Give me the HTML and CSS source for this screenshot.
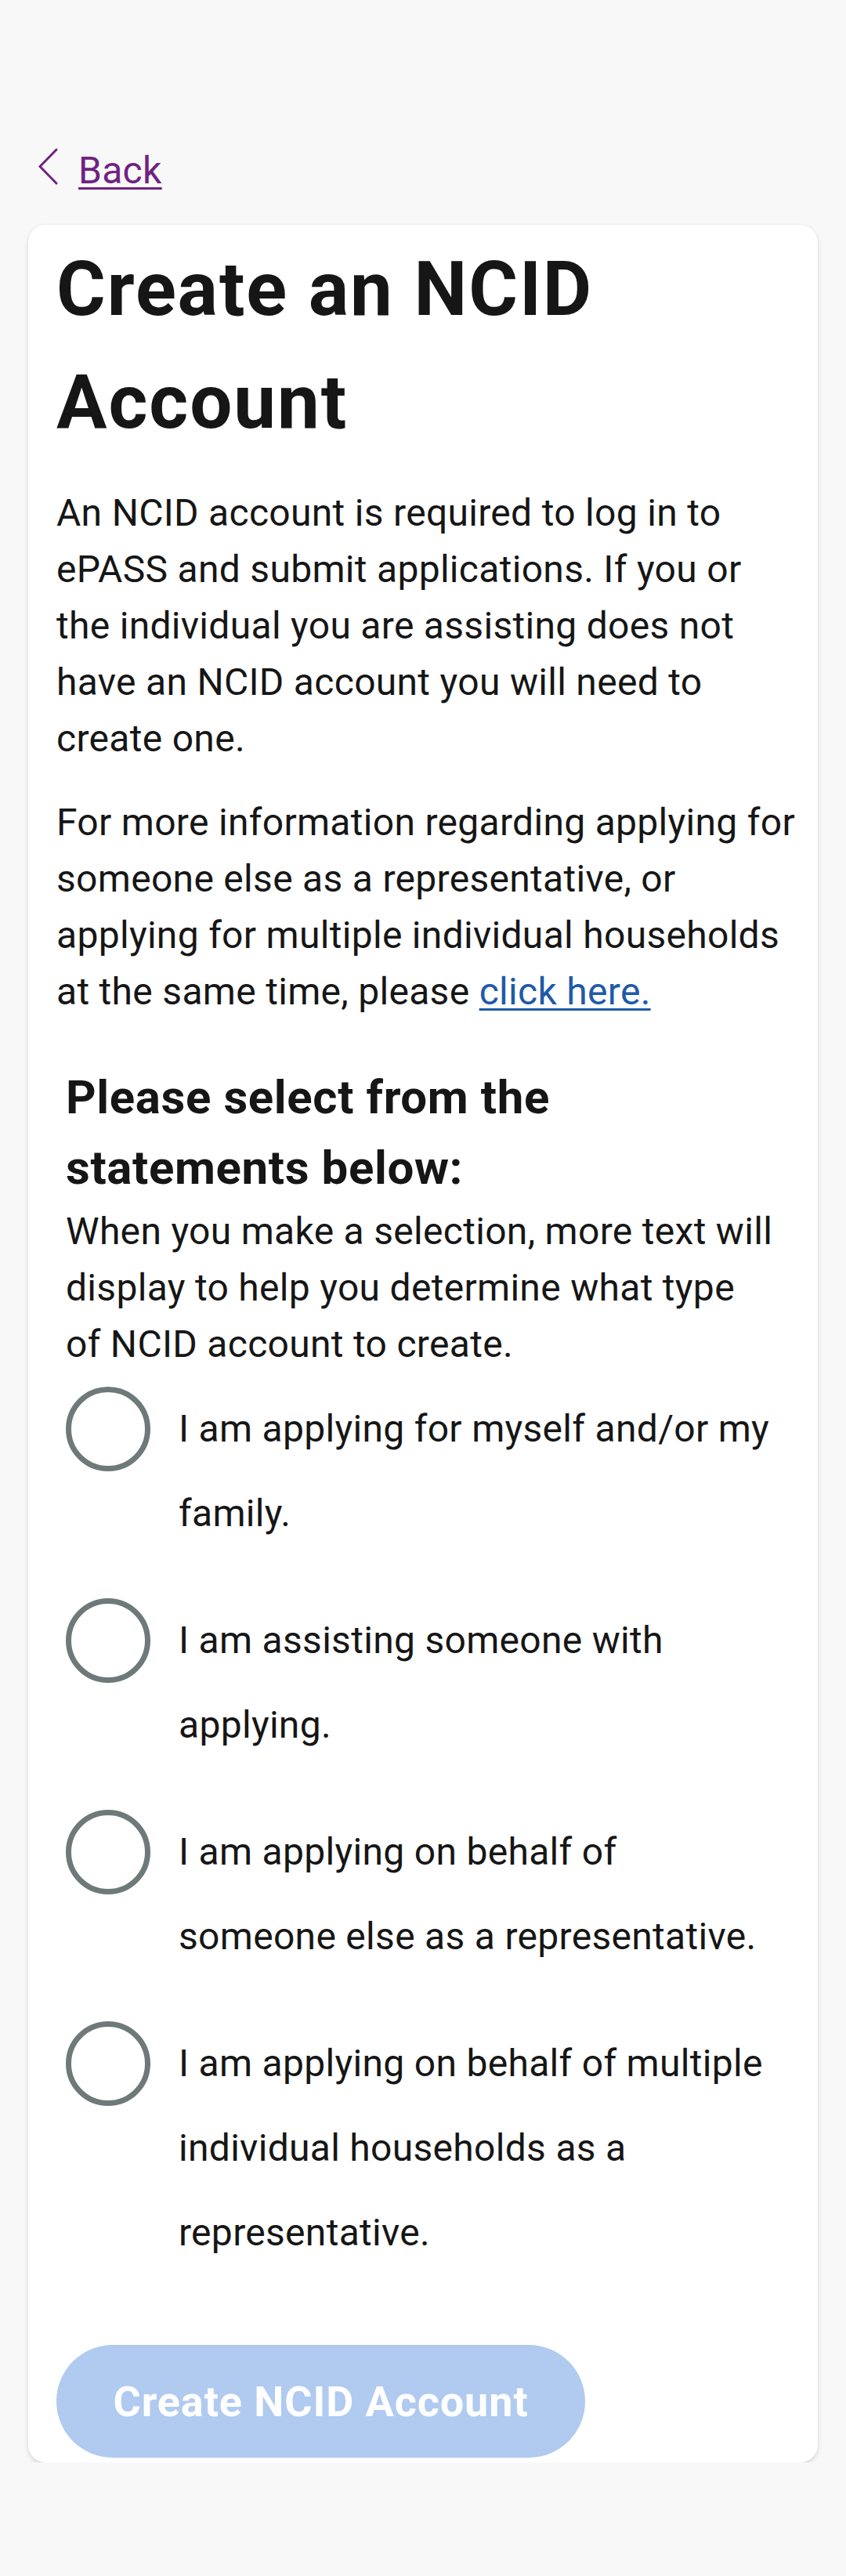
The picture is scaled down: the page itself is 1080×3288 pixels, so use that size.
FILE: index.html
```html
<!DOCTYPE html>
<html lang="en">
<head>
<meta charset="utf-8">
<title>Create an NCID Account</title>
<link rel="stylesheet" href="styles.css">
</head>
<body>
<main class="page">
  <a class="back" href="#">
    <svg class="back-icon" viewBox="0 0 26 47" width="26" height="47" aria-hidden="true">
      <path d="M24 2 L3 23.5 L24 45" fill="none" stroke="currentColor" stroke-width="3" stroke-linecap="round" stroke-linejoin="round"/>
    </svg>
    <span class="back-text">Back</span>
  </a>
  <section class="card">
    <h1 class="title">Create an NCID<br>Account</h1>
    <p class="intro">An NCID account is required to log in to<br>ePASS and submit applications. If you or<br>the individual you are assisting does not<br>have an NCID account you will need to<br>create one.</p>
    <p class="intro">For more information regarding applying for<br>someone else as a representative, or<br>applying for multiple individual households<br>at the same time, please <a class="link" href="#">click here.</a></p>
    <div class="choices">
      <h2 class="choices-title">Please select from the<br>statements below:</h2>
      <p class="choices-hint">When you make a selection, more text will<br>display to help you determine what type<br>of NCID account to create.</p>
      <div class="options">
        <label class="option"><span class="radio"></span><span class="option-text">I am applying for myself and/or my<br>family.</span></label>
        <label class="option"><span class="radio"></span><span class="option-text">I am assisting someone with<br>applying.</span></label>
        <label class="option"><span class="radio"></span><span class="option-text">I am applying on behalf of<br>someone else as a representative.</span></label>
        <label class="option"><span class="radio"></span><span class="option-text">I am applying on behalf of multiple<br>individual households as a<br>representative.</span></label>
      </div>
    </div>
    <button class="cta" type="button">Create NCID Account</button>
  </section>
</main>
</body>
</html>
```
FILE: styles.css
```css
* { box-sizing: border-box; }
html, body { margin: 0; padding: 0; }
body {
  background: #f8f8f8;
  color: #161616;
  font-family: Roboto, "Noto Sans", "Liberation Sans", sans-serif;
  letter-spacing: 0.3px;
}
.page {
  padding: 182px 36px 0;
}
.back {
  display: flex;
  align-items: flex-start;
  height: 72px;
  padding-left: 12px;
  color: #702283;
  text-decoration: none;
  font-size: 48px;
  line-height: 72px;
}
.back-icon {
  flex: none;
  margin-top: 7px;
  margin-right: 26px;
}
.back-text {
  text-decoration: underline;
  text-decoration-thickness: 3px;
  text-underline-offset: 5px;
}
.card {
  margin-top: 33px;
  background: #ffffff;
  border-radius: 22px;
  box-shadow: 0 3px 6px rgba(0, 0, 0, 0.12), 0 0 2px rgba(0, 0, 0, 0.08);
  padding: 10px 36px 6px;
}
.title {
  margin: 0 0 34px;
  font-size: 96px;
  line-height: 144px;
  font-weight: 700;
  letter-spacing: 1.9px;
  white-space: nowrap;
}
.intro {
  margin: 0 0 35px;
  font-size: 48px;
  line-height: 72px;
  white-space: nowrap;
}
.intro:last-of-type { margin-bottom: 0; }
.link {
  color: #205aa7;
  text-decoration: underline;
  text-decoration-thickness: 3px;
  text-underline-offset: 5px;
}
.choices {
  margin-top: 54px;
  padding-left: 12px;
}
.choices-title {
  margin: 0;
  font-size: 60px;
  line-height: 90px;
  font-weight: 700;
  letter-spacing: 0.6px;
  white-space: nowrap;
}
.choices-hint {
  margin: 0;
  font-size: 48px;
  line-height: 72px;
  white-space: nowrap;
}
.options {
  margin-top: 18px;
  display: flex;
  flex-direction: column;
  gap: 54px;
}
.option {
  display: flex;
  align-items: flex-start;
}
.radio {
  flex: none;
  width: 108px;
  height: 108px;
  border: 7px solid #6e7979;
  border-radius: 50%;
}
.option-text {
  margin-left: 36px;
  font-size: 48px;
  line-height: 108px;
  white-space: nowrap;
}
.cta {
  display: block;
  margin-top: 89px;
  width: 675px;
  height: 144px;
  border: none;
  border-radius: 72px;
  background: #b0caf0;
  color: #ffffff;
  font-family: Roboto, "Noto Sans", "Liberation Sans", sans-serif;
  font-size: 54px;
  font-weight: 700;
  letter-spacing: 0.9px;
  padding: 0;
}
```
